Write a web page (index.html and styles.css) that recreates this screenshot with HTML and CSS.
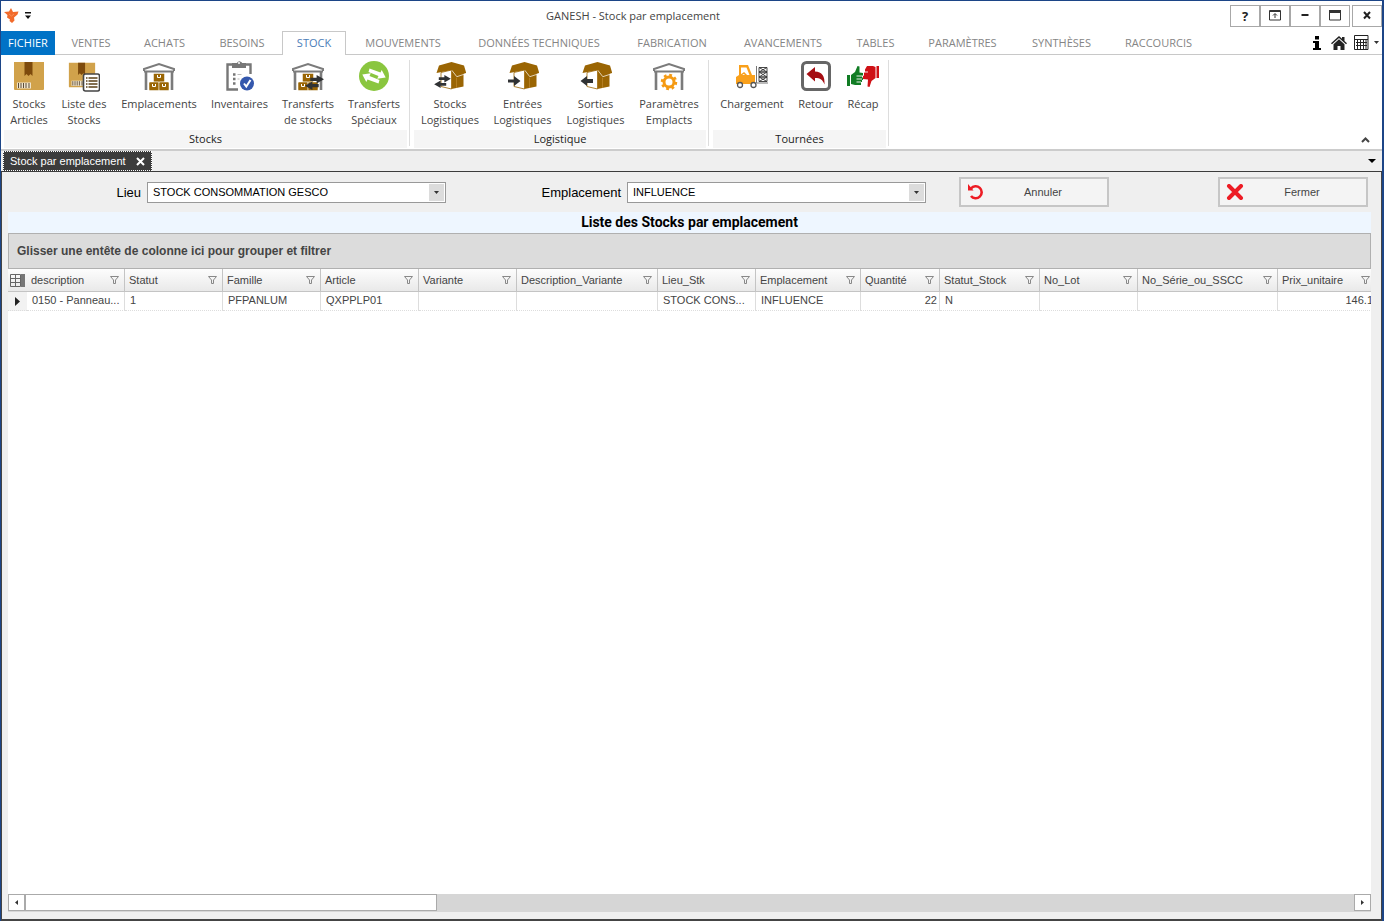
FILE: index.html
```html
<!DOCTYPE html>
<html lang="fr">
<head>
	<meta charset="UTF-8">
	<title>GANESH - Stock par emplacement</title>
	<link rel="stylesheet" href="styles.css">
</head>
<body>
	<!-- shared icon parts -->
	<svg class="defs" width="0" height="0">
		<symbol id="filter" viewBox="0 0 9 8"><path d="M0.5 0.5h8L5.5 4v3.500h-2V4z" fill="none" stroke="#888"/></symbol>
		<symbol id="carton" viewBox="0 0 32 32">
			<path d="M1 2h30v27a1 1 0 0 1-1 1H2a1 1 0 0 1-1-1z" fill="#d1a24b"/>
			<path d="M11.500 2h8v14l-2-2-2 2-2-2-2 2z" fill="#7d4a0c"/>
			<path d="M4 22.500h14v6H4z" fill="#efe4cc"/>
			<path d="M5.500 23v5M8 23v5M10.500 23v5M13 23v5M16 23v5" stroke="#5b4a35"/>
		</symbol>
		<symbol id="shed" viewBox="0 0 32 32">
			<path d="M1 11V9l15-5 15 5v2" fill="none" stroke="#7b7b7b" stroke-width="2"/>
			<path d="M1 11.500h30" stroke="#7b7b7b" stroke-width="2"/>
			<path d="M3 12v18M29 12v18" stroke="#7b7b7b" stroke-width="2.600"/>
		</symbol>
		<symbol id="crates" viewBox="0 0 32 32">
			<g fill="#9a6503" stroke="#fff" stroke-width="0.500">
				<rect x="10.500" y="13.500" width="11" height="8.500" rx="1"/>
				<rect x="6" y="22" width="10" height="8.500" rx="1"/>
				<rect x="16" y="22" width="10" height="8.500" rx="1"/>
			</g>
			<path d="M14.500 15v2.500h3V15M9.500 24v2.500h3V24M19.500 24v2.500h3V24" fill="none" stroke="#fff"/>
		</symbol>
		<symbol id="swap" viewBox="0 0 18 14">
			<path d="M5 2.500h6V0l7 4-7 4V5.500H5zM13 8.500H7V6L0 10l7 4v-2.500h6z" fill="#303234"/>
		</symbol>
		<symbol id="openbox" viewBox="0 0 32 32">
			<path d="M17.500 10L29.500 13v13.500L17.500 29z" fill="#9a6503"/>
			<path d="M7 12.500v14L17.500 29V10z" fill="#fff" stroke="#9a6503" stroke-width="0.800"/>
			<path d="M5 5.500L17.500 2 30 5.500l2.200 7.500-9.200 3-5-6-15.500 3z" fill="#9a6503"/>
			<path d="M18 10.500l4.800 6.200 7-2.300" fill="none" stroke="#fff" stroke-width="0.700"/>
			<path d="M22.500 18v10" stroke="#c08a30" stroke-width="0.700"/>
		</symbol>
	</svg>

	<div class="window">
		<header class="titlebar">
			<div class="quick">
				<svg width="15" height="16" viewBox="0 0 15 16"><path d="M7 0l2 4 5.500-.5-1 3L10 9.500l.5 3L8 15l-2.500-2 .5-1.500L3 9.500 3.500 7 0 4l5-.5z" fill="#f26b2b"/><path d="M5 6l2.500 2L10 6" fill="none" stroke="#f98f58"/></svg>
				<svg width="6" height="7" viewBox="0 0 6 7"><path d="M0 0h6v1.500H0zM0 3.500h6L3 7z" fill="#111"/></svg>
			</div>
			<h1>GANESH - Stock par emplacement</h1>
			<div class="winbtns">
				<button type="button" class="help" aria-label="Aide">?</button>
				<button type="button" aria-label="Ruban"><svg width="12" height="11" viewBox="0 0 12 11"><path d="M.5.5h11v9.500H.5zM0 1.500h12M6 8V4M4 5.500l2-2 2 2" fill="none" stroke="#333"/></svg></button>
				<button type="button" aria-label="Réduire"><svg width="12" height="11" viewBox="0 0 12 11"><path d="M2.500 5h7" stroke="#222" stroke-width="2"/></svg></button>
				<button type="button" aria-label="Agrandir"><svg width="12" height="11" viewBox="0 0 12 11"><path d="M.5.5h11v9.500H.5z" fill="none" stroke="#333"/><path d="M0 1.500h12" stroke="#333" stroke-width="3"/></svg></button>
				<button type="button" class="close" aria-label="Quitter"><svg width="12" height="11" viewBox="0 0 12 11"><path d="M3 2l6 6.500M9 2L3 8.500" stroke="#222" stroke-width="2"/></svg></button>
			</div>
		</header>

		<nav class="menu">
			<div class="tabs">
				<button type="button" class="file">FICHIER</button>
				<button type="button">VENTES</button>
				<button type="button">ACHATS</button>
				<button type="button">BESOINS</button>
				<button type="button" class="active">STOCK</button>
				<button type="button">MOUVEMENTS</button>
				<button type="button">DONNÉES TECHNIQUES</button>
				<button type="button">FABRICATION</button>
				<button type="button">AVANCEMENTS</button>
				<button type="button">TABLES</button>
				<button type="button">PARAMÈTRES</button>
				<button type="button">SYNTHÈSES</button>
				<button type="button">RACCOURCIS</button>
			</div>
			<div class="tools">
				<svg class="info" width="8" height="14" viewBox="0 0 8 14"><path d="M2 0h4v3.500H2zM0 5h6v7h2v2H0v-2h2V7H0z" fill="#000"/></svg>
				<svg width="16" height="14" viewBox="0 0 16 14"><path d="M8 0l3 2.700V1h2.500v4L16 7.200l-1 1L8 2 1 8.200l-1-1z" fill="#222"/><path d="M8 3.200l5.500 5V14H9.500v-4h-3v4h-4V8.200z" fill="#222"/></svg>
				<svg width="15" height="15" viewBox="0 0 15 15"><path d="M.5.5h13.500v14H.5zM1 4.500h13M2 7.500h11M2 10.500h11M3.500 5v9M6.500 5v9M9.500 5v9M12 5v9" fill="none" stroke="#222"/></svg>
				<svg class="caret" width="5" height="3" viewBox="0 0 5 3"><path d="M0 0h5L2.500 3z" fill="#333"/></svg>
			</div>
		</nav>

		<section class="ribbon">
			<div class="group">
				<div class="items stocks">
					<button type="button"><svg class="ico"><use href="#carton"/></svg>Stocks<br>Articles</button>
					<button type="button"><svg class="ico" viewBox="0 0 32 32">
						<use href="#carton" x="0" y="1" width="28" height="28"/>
						<rect x="15.500" y="14" width="16" height="17" rx="2" fill="#fff" stroke="#444" stroke-width="1.600"/>
						<path d="M18 18h1.500M18 21h1.500M18 24h1.500M18 27h1.500M20.500 18h9M20.500 21h9M20.500 24h9M20.500 27h9" stroke="#5b4017" stroke-width="1.300"/>
					</svg>Liste des<br>Stocks</button>
					<button type="button"><svg class="ico"><use href="#shed"/><use href="#crates"/></svg>Emplacements</button>
					<button type="button"><svg class="ico" viewBox="0 0 32 32">
						<path d="M8 4.500H3.500v25H14M20 4.500h6.500V14" fill="none" stroke="#777" stroke-width="2.400"/>
						<path d="M8 3h5a2.500 2.500 0 0 1 4-1q1 0 1 1h4v5H8z" fill="#777"/><circle cx="15" cy="3" r="1" fill="#fff"/>
						<path d="M9 14.500h2.500M9 19h2.500M9 23.500h2.500" stroke="#777" stroke-width="2.400"/><path d="M13.500 14.500h4M13.500 19h2" stroke="#bbb"/>
						<circle cx="23" cy="23.500" r="7" fill="#3558ad"/><path d="M20 23.500l2.300 3L26.500 20" fill="none" stroke="#fff" stroke-width="2"/>
					</svg>Inventaires</button>
					<button type="button"><svg class="ico"><use href="#shed"/><use href="#crates"/><use href="#swap" x="13" y="15" width="19" height="15"/></svg>Transferts<br>de stocks</button>
					<button type="button"><svg class="ico" viewBox="0 0 32 32">
						<circle cx="16" cy="16" r="15" fill="#8ac63f"/>
						<path d="M11.500 8.500l11 4 1.200-2.500 4 7.500-8.500 1.200 1.300-2.700L10.500 12zM20.500 23.500l-11-4-1.200 2.500-4-7.500 8.500-1.200-1.300 2.700 10 4z" fill="#fff"/>
					</svg>Transferts<br>Spéciaux</button>
				</div>
				<div class="caption">Stocks</div>
			</div>
			<div class="group">
				<div class="items logistique">
					<button type="button"><svg class="ico"><use href="#openbox"/><use href="#swap" x="0" y="15" width="17" height="13"/></svg>Stocks<br>Logistiques</button>
					<button type="button"><svg class="ico"><use href="#openbox"/><path d="M1 19.500h6V16l6.500 5L7 26v-3.500H1z" fill="#303234"/></svg>Entrées<br>Logistiques</button>
					<button type="button"><svg class="ico"><use href="#openbox"/><path d="M13 19H7v-3L.5 21 7 26v-3h6z" fill="#303234"/></svg>Sorties<br>Logistiques</button>
					<button type="button"><svg class="ico"><use href="#shed"/>
						<circle cx="16" cy="22" r="5" fill="none" stroke="#f59a13" stroke-width="3"/>
						<circle cx="16" cy="22" r="7" fill="none" stroke="#f59a13" stroke-width="2.500" stroke-dasharray="2.750 2.750"/>
					</svg>Paramètres<br>Emplacts</button>
				</div>
				<div class="caption">Logistique</div>
			</div>
			<div class="group">
				<div class="items tournees">
					<button type="button"><svg class="ico" viewBox="0 0 32 32">
						<path d="M0 17l3-2V5h9l4 10h3v9H0z" fill="#f9a01b"/><path d="M5 7.500h5.500l3 7.500H5z" fill="#fff"/><path d="M5 15l3-2 3 3" fill="none" stroke="#f9a01b" stroke-width="1.500"/>
						<circle cx="4" cy="25" r="2.500" fill="#fff" stroke="#555" stroke-width="1.300"/><circle cx="17.500" cy="25" r="2.500" fill="#fff" stroke="#555" stroke-width="1.300"/>
						<path d="M20.500 6v17H32" fill="none" stroke="#777"/>
						<path d="M23 7.500h8V12h-8zM23 12h8v5h-8zM23 17h8v4.500h-8zM23 7.500l8 4.500M31 7.500L23 12M23 12l8 5M31 12l-8 5M23 17l8 4.500M31 17l-8 4.500" fill="none" stroke="#333" stroke-width="0.900"/>
					</svg>Chargement</button>
					<button type="button"><svg class="ico" viewBox="0 0 32 32">
						<rect x="2.500" y="2.500" width="27" height="27" rx="4" fill="#fff" stroke="#666" stroke-width="3"/>
						<path d="M6.500 14L15 7v4.500c7 0 10 5 9.500 13-2-5-4-6.500-9.500-6.500v3.500z" fill="#a50d12"/>
					</svg>Retour</button>
					<button type="button"><svg class="ico" viewBox="0 0 32 32">
						<path d="M0 15h3v11H0zM4 15l4-3 2.500-6 2 .5v6l3.500.5v2.500h-1v2h1v2.500h-1v2h-1V25H8l-4-1z" fill="#117c24"/>
						<path d="M29.500 6H32v12h-2.500zM28.500 7v11l-4 3-2 6-2-.5.500-7-5-.5v-3l1-.5V12.500l1-.5V9.500L20 6h6z" fill="#cf1116"/>
						<path d="M9.500 16H15M9.500 19H15M9.500 22H14M17 12h4" stroke="#fff" stroke-width="0.900"/>
					</svg>Récap</button>
				</div>
				<div class="caption">Tournées</div>
			</div>
			<button type="button" class="collapse" aria-label="Réduire le ruban"><svg width="9" height="6" viewBox="0 0 9 6"><path d="M1 5l3.500-3.500L8 5" fill="none" stroke="#444" stroke-width="2"/></svg></button>
		</section>

		<div class="docs">
			<div class="doc">Stock par emplacement
				<button type="button" aria-label="Fermer l'onglet"><svg width="9" height="9" viewBox="0 0 9 9"><path d="M1 1l7 7M8 1L1 8" stroke="#fff" stroke-width="2"/></svg></button>
			</div>
			<svg width="8" height="4" viewBox="0 0 8 4"><path d="M0 0h8L4 4z" fill="#000"/></svg>
		</div>

		<main class="page">
			<form class="filters">
				<label for="lieu">Lieu</label>
				<div class="combo">
					<select id="lieu"><option>STOCK CONSOMMATION GESCO</option></select>
					<span class="drop"><svg width="5" height="3" viewBox="0 0 5 3"><path d="M0 0h5L2.500 3z" fill="#333"/></svg></span>
				</div>
				<label for="emplacement">Emplacement</label>
				<div class="combo">
					<select id="emplacement"><option>INFLUENCE</option></select>
					<span class="drop"><svg width="5" height="3" viewBox="0 0 5 3"><path d="M0 0h5L2.500 3z" fill="#333"/></svg></span>
				</div>
				<button type="button" class="action"><svg width="18" height="16" viewBox="0 0 18 16"><path d="M4 4.500A6 6 0 1 1 4 12" fill="none" stroke="#ed1c24" stroke-width="2.600"/><path d="M1 0l5.500 6.500H1z" fill="#ed1c24"/></svg><span>Annuler</span></button>
				<button type="button" class="action last"><svg width="18" height="16" viewBox="0 0 18 16"><path d="M3 2l12 12M15 2L3 14" stroke="#ed1c24" stroke-width="4" stroke-linecap="round"/></svg><span>Fermer</span></button>
			</form>

			<h2>Liste des Stocks par emplacement</h2>

			<div class="grid">
				<div class="grouping">Glisser une entête de colonne ici pour grouper et filtrer</div>
				<div class="rows">
					<table>
						<colgroup>
							<col class="c19"><col class="c98"><col class="c98"><col class="c98"><col class="c98"><col class="c98"><col class="c141"><col class="c98"><col class="c105"><col class="c79"><col class="c100"><col class="c98"><col class="c140"><col class="c98">
						</colgroup>
						<thead>
							<tr>
								<th class="corner"><svg width="15" height="13" viewBox="0 0 15 13"><path d="M.5.5h10v12H.5zM0 4.500h10M0 8.500h10M5.500 0v13" fill="none" stroke="#666"/><path d="M11 0h4v13h-4z" fill="#777"/></svg></th>
								<th><div>description<svg><use href="#filter"/></svg></div></th>
								<th><div>Statut<svg><use href="#filter"/></svg></div></th>
								<th><div>Famille<svg><use href="#filter"/></svg></div></th>
								<th><div>Article<svg><use href="#filter"/></svg></div></th>
								<th><div>Variante<svg><use href="#filter"/></svg></div></th>
								<th><div>Description_Variante<svg><use href="#filter"/></svg></div></th>
								<th><div>Lieu_Stk<svg><use href="#filter"/></svg></div></th>
								<th><div>Emplacement<svg><use href="#filter"/></svg></div></th>
								<th><div>Quantité<svg><use href="#filter"/></svg></div></th>
								<th><div>Statut_Stock<svg><use href="#filter"/></svg></div></th>
								<th><div>No_Lot<svg><use href="#filter"/></svg></div></th>
								<th><div>No_Série_ou_SSCC<svg><use href="#filter"/></svg></div></th>
								<th><div>Prix_unitaire<svg><use href="#filter"/></svg></div></th>
							</tr>
						</thead>
						<tbody>
							<tr>
								<td class="current"><svg width="5" height="9" viewBox="0 0 5 9"><path d="M0 0l5 4.500L0 9z" fill="#222"/></svg></td>
								<td>0150 - Panneau...</td>
								<td>1</td>
								<td>PFPANLUM</td>
								<td>QXPPLP01</td>
								<td></td>
								<td></td>
								<td>STOCK CONS...</td>
								<td>INFLUENCE</td>
								<td class="num">22</td>
								<td>N</td>
								<td></td>
								<td></td>
								<td class="num">146.1</td>
							</tr>
						</tbody>
					</table>
				</div>
				<div class="scroll">
					<button type="button" aria-label="Défiler à gauche"><svg width="3" height="5" viewBox="0 0 3 5"><path d="M3 0v5L0 2.500z" fill="#333"/></svg></button>
					<div class="track"><div class="thumb"></div></div>
					<button type="button" aria-label="Défiler à droite"><svg width="3" height="5" viewBox="0 0 3 5"><path d="M0 0v5l3-2.500z" fill="#333"/></svg></button>
				</div>
			</div>
		</main>
	</div>
</body>
</html>
```
FILE: styles.css
```css
* {
	box-sizing: border-box;
}
body {
	margin: 0;
	font-family: "Open Sans", sans-serif;
	font-size: 11px;
	color: #444;
	background: #1c4587;
}
button {
	margin: 0;
	padding: 0;
	border: 0;
	background: none;
	font: inherit;
	color: inherit;
}
svg {
	display: block;
	flex: none;
}
.defs {
	position: absolute;
}
.window {
	display: flex;
	flex-direction: column;
	min-height: 100vh;
	border: solid #1c4587;
	border-width: 1px 2px 0 1px;
	background: #fff;
}

/* title bar */
.titlebar {
	display: grid;
	grid-template-columns: 1fr auto 1fr;
	align-items: center;
	height: 29px;
}
.quick {
	display: flex;
	align-items: center;
	gap: 6px;
	padding-left: 3px;
}
.titlebar h1 {
	margin: 0;
	padding-right: 117px;
	font-size: 11px;
	font-weight: normal;
}
.winbtns {
	display: flex;
	justify-content: flex-end;
}
.winbtns button {
	display: flex;
	align-items: center;
	justify-content: center;
	width: 30px;
	height: 22px;
	border: 1px solid #a8a8a8;
}
.winbtns .help {
	font-size: 13px;
	font-weight: bold;
	color: #222;
}
.winbtns .close {
	margin-left: 2px;
}

/* menu */
.menu {
	display: flex;
	justify-content: space-between;
	height: 25px;
	padding-top: 1px;
	border-bottom: 1px solid #c8c8c8;
}
.tabs {
	display: grid;
	grid-template-columns: 54px 72px 75px 80px 64px 114px 158px 108px 114px 71px 103px 95px 99px;
	height: 24px;
}
.tabs button {
	padding-bottom: 2px;
	color: #858585;
}
.tabs .file {
	background: #0072c6;
	color: #fff;
}
.tabs .active {
	border: 1px solid #c8c8c8;
	border-bottom: 0;
	background: #fff;
	color: #4b7db8;
}
.tools {
	display: flex;
	align-items: center;
	gap: 7px;
	padding-right: 3px;
}
.tools .info {
	margin-right: 3px;
}
.tools .caret {
	margin-left: -2px;
}

/* ribbon */
.ribbon {
	display: flex;
	height: 96px;
	padding-left: 3px;
	border-bottom: 2px solid #ccc;
}
.group {
	position: relative;
	display: flex;
	flex-direction: column;
	justify-content: space-between;
	margin-right: 7px;
	padding-bottom: 1px;
}
.group::after {
	content: "";
	position: absolute;
	top: 5px;
	right: -3px;
	bottom: 3px;
	border-left: 1px solid #ddd;
}
.items {
	display: grid;
	padding-top: 5px;
}
.items button {
	display: block;
	align-self: start;
	line-height: 16px;
	text-align: center;
	white-space: nowrap;
}
.stocks {
	grid-template-columns: 50px 60px 90px 71px 66px 66px;
}
.logistique {
	grid-template-columns: 72px 73px 73px 74px;
}
.tournees {
	grid-template-columns: 78px 49px 46px;
}
.ico {
	width: 32px;
	height: 32px;
	margin: 0 auto 4px;
}
.caption {
	line-height: 18px;
	text-align: center;
	color: #222;
	background: #f5f5f5;
}
.collapse {
	align-self: flex-end;
	margin: 0 12px 6px auto;
}

/* open documents */
.docs {
	display: flex;
	align-items: center;
	justify-content: space-between;
	height: 21px;
	padding: 0 6px 0 2px;
	border-bottom: 1px solid #3c3c3c;
	background: #efefef;
}
.doc {
	display: flex;
	align-items: center;
	gap: 10px;
	height: 20px;
	padding: 0 6px;
	border: 1px dotted #fff;
	background: #3c3c3c;
	color: #fff;
	font-family: "Liberation Sans", Arial, sans-serif;
	font-size: 11px;
}

/* page */
.page {
	display: flex;
	flex: 1;
	flex-direction: column;
	padding: 0 10px 7px 6px;
	border: solid #444;
	border-width: 0 1px 2px 1px;
	background: #efefef;
	font-family: "Liberation Sans", Arial, sans-serif;
	font-size: 11px;
}
.filters {
	display: flex;
	align-items: center;
	height: 40px;
	padding-right: 3px;
}
.filters label {
	width: 97px;
	margin-right: 6px;
	text-align: right;
	font-size: 13px;
	color: #000;
}
.filters label:first-child {
	width: 133px;
}
.combo {
	position: relative;
	width: 299px;
	margin-right: 78px;
}
.combo select {
	display: block;
	width: 100%;
	height: 21px;
	padding: 0 20px 0 5px;
	appearance: none;
	border: 1px solid #999;
	border-radius: 0;
	background: #fff;
	font: inherit;
	color: #000;
}
.drop {
	position: absolute;
	top: 2px;
	right: 2px;
	display: flex;
	align-items: center;
	justify-content: center;
	width: 15px;
	height: 17px;
	background: #dcdcdc;
	pointer-events: none;
}
.action {
	display: flex;
	align-items: center;
	width: 150px;
	height: 30px;
	margin-left: -45px;
	padding: 0 6px;
	border: 2px solid #c6c6c6;
	background: #f4f4f4;
}
.action span {
	flex: 1;
	text-align: center;
}
.action.last {
	margin-left: auto;
}
.page h2 {
	margin: 0;
	line-height: 21px;
	text-align: center;
	font-family: Roboto, Arial, sans-serif;
	font-size: 14px;
	color: #000;
	background: #eef6ff;
}

/* stock grid */
.grid {
	display: flex;
	flex: 1;
	flex-direction: column;
	background: #fff;
}
.grouping {
	padding: 0 8px;
	border: 1px solid #b0b0b0;
	line-height: 34px;
	font-size: 12px;
	font-weight: bold;
	background: #dcdcdc;
}
.rows {
	flex: 1 0 0;
	width: 0;
	min-width: 100%;
	overflow: hidden;
}
table {
	width: 1368px;
	border-collapse: separate;
	border-spacing: 0;
	table-layout: fixed;
}
.c19 { width: 19px; }
.c79 { width: 79px; }
.c98 { width: 98px; }
.c100 { width: 100px; }
.c105 { width: 105px; }
.c140 { width: 140px; }
.c141 { width: 141px; }
th {
	height: 23px;
	padding: 0 5px 0 4px;
	border-right: 1px solid #c4c4c4;
	border-bottom: 1px solid #c4c4c4;
	background: linear-gradient(#fdfdfd, #e9e9e9);
	font-weight: normal;
}
th div {
	display: flex;
	align-items: center;
	justify-content: space-between;
}
th svg {
	width: 9px;
	height: 8px;
}
.corner {
	padding: 0 0 0 2px;
	border-right: 0;
}
.corner svg {
	width: 15px;
	height: 13px;
}
td {
	height: 19px;
	padding: 0 2px 2px 5px;
	border-right: 1px solid #ddd;
	border-bottom: 1px dotted #ddd;
	line-height: 16px;
	white-space: nowrap;
}
.num {
	padding: 0 2px 2px;
	text-align: right;
}
.current {
	padding: 0 0 0 7px;
	border-right: 0;
	background: #f2f2f2;
}
.scroll {
	display: flex;
	height: 18px;
	background: #d6d6d6;
}
.scroll button {
	display: flex;
	align-items: center;
	justify-content: center;
	width: 17px;
	height: 17px;
	border: 1px solid #aaa;
	background: #fff;
}
.track {
	flex: 1;
}
.thumb {
	width: 31%;
	height: 17px;
	border: 1px solid #aaa;
	background: #fff;
}
```
